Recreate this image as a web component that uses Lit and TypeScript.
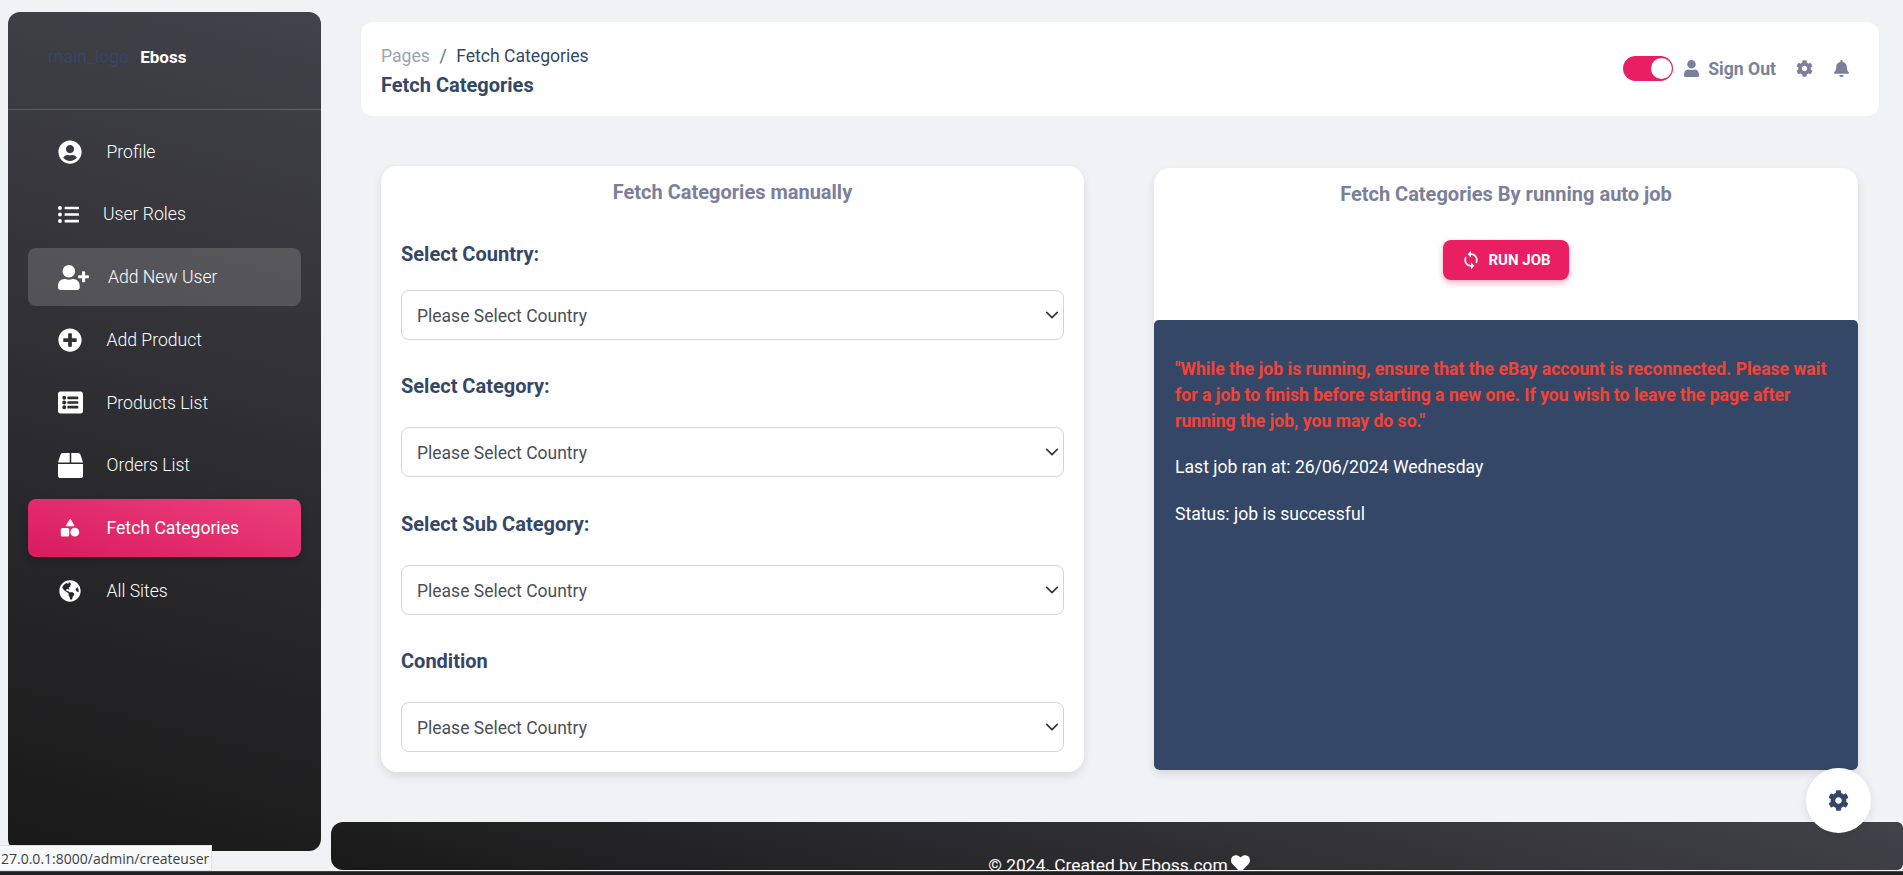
import { LitElement, css, html, svg } from "lit";
import { customElement } from "lit/decorators.js";

const ICONS: Record<string, { box: string; d: string }> = {
  profile: { box: "0 0 496 512", d: "M248 8C111 8 0 119 0 256s111 248 248 248 248-111 248-248S385 8 248 8zm0 96c48.600 0 88 39.400 88 88s-39.400 88-88 88-88-39.400-88-88 39.400-88 88-88zm0 344c-58.700 0-111.300-26.600-146.500-68.200 18.800-35.400 55.600-59.800 98.500-59.800 2.400 0 4.800.4 7.100 1.100 13 4.200 26.600 6.900 40.900 6.900 14.300 0 28-2.700 40.900-6.900 2.300-.7 4.700-1.100 7.100-1.100 42.900 0 79.700 24.400 98.500 59.800C359.300 421.400 306.700 448 248 448z" },
  list: { box: "0 0 512 512", d: "M48 48a48 48 0 1 0 48 48 48 48 0 0 0-48-48zm0 160a48 48 0 1 0 48 48 48 48 0 0 0-48-48zm0 160a48 48 0 1 0 48 48 48 48 0 0 0-48-48zm448 16H176a16 16 0 0 0-16 16v32a16 16 0 0 0 16 16h320a16 16 0 0 0 16-16v-32a16 16 0 0 0-16-16zm0-320H176a16 16 0 0 0-16 16v32a16 16 0 0 0 16 16h320a16 16 0 0 0 16-16V80a16 16 0 0 0-16-16zm0 160H176a16 16 0 0 0-16 16v32a16 16 0 0 0 16 16h320a16 16 0 0 0 16-16v-32a16 16 0 0 0-16-16z" },
  userPlus: { box: "0 0 640 512", d: "M624 208h-64v-64c0-8.800-7.200-16-16-16h-32c-8.800 0-16 7.200-16 16v64h-64c-8.800 0-16 7.200-16 16v32c0 8.800 7.200 16 16 16h64v64c0 8.800 7.200 16 16 16h32c8.800 0 16-7.200 16-16v-64h64c8.800 0 16-7.200 16-16v-32c0-8.800-7.200-16-16-16zm-400 48c70.700 0 128-57.300 128-128S294.700 0 224 0 96 57.300 96 128s57.300 128 128 128zm89.600 32h-16.700c-22.200 10.200-46.900 16-72.900 16s-50.600-5.800-72.900-16h-16.700C60.200 288 0 348.200 0 422.400V464c0 26.500 21.500 48 48 48h352c26.500 0 48-21.500 48-48v-41.600c0-74.200-60.200-134.400-134.400-134.400z" },
  plus: { box: "0 0 512 512", d: "M256 8C119 8 8 119 8 256s111 248 248 248 248-111 248-248S393 8 256 8zm144 276c0 6.600-5.400 12-12 12h-92v92c0 6.600-5.400 12-12 12h-56c-6.600 0-12-5.400-12-12v-92h-92c-6.600 0-12-5.400-12-12v-56c0-6.600 5.400-12 12-12h92v-92c0-6.600 5.400-12 12-12h56c6.600 0 12 5.400 12 12v92h92c6.600 0 12 5.400 12 12v56z" },
  listAlt: { box: "0 0 512 512", d: "M464 480H48c-26.510 0-48-21.490-48-48V80c0-26.510 21.490-48 48-48h416c26.510 0 48 21.490 48 48v352c0 26.510-21.490 48-48 48zM128 120c-22.091 0-40 17.909-40 40s17.909 40 40 40 40-17.909 40-40-17.909-40-40-40zm0 96c-22.091 0-40 17.909-40 40s17.909 40 40 40 40-17.909 40-40-17.909-40-40-40zm0 96c-22.091 0-40 17.909-40 40s17.909 40 40 40 40-17.909 40-40-17.909-40-40-40zm288-136v-32c0-6.627-5.373-12-12-12H204c-6.627 0-12 5.373-12 12v32c0 6.627 5.373 12 12 12h200c6.627 0 12-5.373 12-12zm0 96v-32c0-6.627-5.373-12-12-12H204c-6.627 0-12 5.373-12 12v32c0 6.627 5.373 12 12 12h200c6.627 0 12-5.373 12-12zm0 96v-32c0-6.627-5.373-12-12-12H204c-6.627 0-12 5.373-12 12v32c0 6.627 5.373 12 12 12h200c6.627 0 12-5.373 12-12z" },
  box: { box: "0 0 512 512", d: "M509.500 184.600L458.900 32.800C452.400 13.200 434.100 0 413.400 0H272v192h238.700c-.4-2.500-.4-5-1.200-7.400zM240 0H98.600c-20.700 0-39 13.200-45.500 32.800L2.500 184.600c-.8 2.400-.8 4.900-1.200 7.400H240V0zM0 224v240c0 26.500 21.500 48 48 48h416c26.500 0 48-21.500 48-48V224H0z" },
  globe: { box: "0 0 496 512", d: "M248 8C111.030 8 0 119.030 0 256s111.030 248 248 248 248-111.030 248-248S384.970 8 248 8zm82.290 357.600c-3.900 3.880-7.990 7.950-11.310 11.280-2.990 3-5.100 6.700-6.170 10.710-1.510 5.660-2.730 11.380-4.770 16.870l-17.390 46.850c-13.760 3-28 4.690-42.650 4.690v-27.380c1.690-12.620-7.640-36.260-22.630-51.250-6-6-9.370-14.140-9.370-22.630v-32.010c0-11.640-6.270-22.340-16.460-27.980-14.370-7.950-34.810-19.060-48.810-26.110-11.480-5.780-22.100-13.140-31.650-21.750l-.8-.72a114.792 114.792 0 0 1-18.060-20.740c-9.380-13.770-24.660-36.420-34.590-51.140 20.470-45.500 57.360-82.040 103.200-101.890l24.010 12.010C203.480 89.740 216 82.010 216 70.110v-11.300c7.990-1.290 16.120-2.110 24.430-2.410l28.300 28.300c6.250 6.250 6.250 16.380 0 22.630L264 112l-10.340 10.340c-3.120 3.120-3.120 8.190 0 11.310l4.690 4.690c3.120 3.120 3.120 8.190 0 11.310l-8 8a8.008 8.008 0 0 1-5.660 2.340h-8.990c-2.080 0-4.080.81-5.580 2.270l-9.920 9.650a8.008 8.008 0 0 0-1.580 9.310l15.590 31.190c2.660 5.320-1.210 11.580-7.150 11.580h-5.640c-1.930 0-3.790-.7-5.240-1.960l-9.280-8.060a16.017 16.017 0 0 0-15.550-3.100l-31.170 10.390a11.950 11.950 0 0 0-8.170 11.340c0 4.530 2.560 8.660 6.610 10.690l11.080 5.540c9.410 4.710 19.790 7.160 30.310 7.160s22.600 27.290 32 32h66.750c8.490 0 16.620 3.370 22.630 9.370l13.690 13.690a30.503 30.503 0 0 1 8.930 21.570 46.536 46.536 0 0 1-13.720 32.980zM417 274.250c-5.790-1.450-10.840-5-14.150-9.970l-17.980-26.970a23.970 23.970 0 0 1 0-26.620l19.590-29.380c2.320-3.470 5.500-6.290 9.240-8.150l12.980-6.490C440.200 193.590 448 223.870 448 256c0 8.670-.74 17.160-1.830 25.540L417 274.250z" },
  cog: { box: "0 0 512 512", d: "M487.400 315.700l-42.600-24.600c4.300-23.200 4.300-47 0-70.200l42.600-24.600c4.900-2.800 7.100-8.600 5.500-14-11.100-35.600-30-67.800-54.700-94.600-3.800-4.100-10-5.100-14.800-2.300L380.800 110c-17.900-15.400-38.500-27.300-60.800-35.100V25.800c0-5.600-3.900-10.500-9.400-11.700-36.700-8.200-74.300-7.800-109.200 0-5.500 1.200-9.400 6.100-9.400 11.700V75c-22.200 7.900-42.800 19.800-60.800 35.100L88.700 85.500c-4.900-2.800-11-1.900-14.800 2.300-24.700 26.700-43.600 58.900-54.700 94.600-1.700 5.400.6 11.200 5.500 14L67.300 221c-4.300 23.200-4.300 47 0 70.200l-42.600 24.600c-4.900 2.800-7.100 8.600-5.500 14 11.100 35.600 30 67.800 54.700 94.600 3.800 4.100 10 5.100 14.800 2.300l42.600-24.600c17.900 15.400 38.500 27.300 60.800 35.100v49.200c0 5.600 3.900 10.500 9.400 11.700 36.700 8.200 74.300 7.800 109.200 0 5.500-1.200 9.400-6.100 9.400-11.700v-49.200c22.200-7.900 42.800-19.800 60.800-35.100l42.600 24.600c4.900 2.800 11 1.900 14.800-2.300 24.700-26.700 43.600-58.900 54.700-94.600 1.500-5.500-.7-11.300-5.600-14.100zM256 336c-44.100 0-80-35.900-80-80s35.900-80 80-80 80 35.900 80 80-35.900 80-80 80z" },
  bell: { box: "0 0 448 512", d: "M224 512c35.320 0 63.970-28.650 63.970-64H160.030c0 35.350 28.650 64 63.970 64zm215.390-149.710c-19.320-20.760-55.470-51.990-55.470-154.290 0-77.700-54.480-139.900-127.940-155.160V32c0-17.670-14.320-32-31.980-32s-31.980 14.330-31.980 32v20.840C118.560 68.100 64.080 130.300 64.080 208c0 102.300-36.150 133.530-55.470 154.290-6 6.450-8.660 14.160-8.610 21.710.11 16.400 12.980 32 32.100 32h383.800c19.120 0 32-15.600 32.100-32 .05-7.550-2.610-15.270-8.610-21.710z" },
  user: { box: "0 0 448 512", d: "M224 256c70.700 0 128-57.300 128-128S294.700 0 224 0 96 57.300 96 128s57.300 128 128 128zm89.600 32h-16.700c-22.200 10.200-46.900 16-72.900 16s-50.600-5.800-72.900-16h-16.700C60.200 288 0 348.200 0 422.400V464c0 26.500 21.500 48 48 48h352c26.500 0 48-21.500 48-48v-41.600c0-74.200-60.200-134.400-134.400-134.400z" },
  sync: { box: "0 0 24 24", d: "M12 4V1L8 5l4 4V6c3.310 0 6 2.690 6 6 0 1.010-.25 1.970-.7 2.800l1.460 1.460C19.540 15.030 20 13.570 20 12c0-4.420-3.580-8-8-8zm0 14c-3.310 0-6-2.690-6-6 0-1.010.25-1.970.7-2.800L5.240 7.740C4.460 8.970 4 10.430 4 12c0 4.420 3.580 8 8 8v3l4-4-4-4v3z" },
  heart: { box: "0 0 512 512", d: "M462.300 62.600C407.500 15.900 326 24.300 275.700 76.200L256 96.500l-19.700-20.300C186.100 24.300 104.500 15.900 49.700 62.600c-62.800 53.600-66.100 149.800-9.900 207.900l193.500 199.800c12.500 12.900 32.800 12.900 45.300 0l193.500-199.800c56.300-58.100 53-154.300-9.800-207.900z" },
};

function icon(name: string, size: number) {
  const i = ICONS[name];
  return html`<svg class="ic" width=${size} height=${size} viewBox=${i.box} fill="currentColor">${svg`<path d=${i.d}></path>`}</svg>`;
}

// square + circle + triangle, mirrored from the usual shapes glyph
const shapesIcon = html`<svg class="ic" width="20" height="20" viewBox="0 0 20 20" fill="currentColor">
  <path d="M10.200 1.200l3.800 6.600H6.400z" stroke="currentColor" stroke-linejoin="round"></path>
  <rect x="0.800" y="10" width="8.400" height="8.400" rx="1.500"></rect>
  <circle cx="14.800" cy="14.200" r="4.400"></circle>
</svg>`;

const NAV = [
  { key: "profile", label: "Profile", icon: "profile", size: 24 },
  { key: "roles", label: "User Roles", icon: "list", size: 21 },
  { key: "adduser", label: "Add New User", icon: "userPlus", size: 31, hover: true },
  { key: "addproduct", label: "Add Product", icon: "plus", size: 24 },
  { key: "products", label: "Products List", icon: "listAlt", size: 25 },
  { key: "orders", label: "Orders List", icon: "box", size: 25 },
  { key: "fetch", label: "Fetch Categories", active: true },
  { key: "sites", label: "All Sites", icon: "globe", size: 22 },
];

const FIELDS = ["Select Country:", "Select Category:", "Select Sub Category:", "Condition"];

@customElement("app-root")
export class AppRoot extends LitElement {
  render() {
    return html`
      <div class="shell">
        <aside class="sidebar">
          <div class="brand">
            <span class="logo-alt">main_logo</span>
            <span class="brand-name">Eboss</span>
          </div>
          <nav class="menu">
            ${NAV.map(
              (n) => html`
                <a class="item item-${n.key} ${n.active ? "active" : ""} ${n.hover ? "hover" : ""}">
                  <span class="item-icon">${n.icon ? icon(n.icon, n.size!) : shapesIcon}</span>
                  <span class="item-label">${n.label}</span>
                </a>
              `,
            )}
          </nav>
        </aside>

        <div class="main">
          <header class="navbar">
            <div>
              <div class="crumbs"><span class="muted">Pages</span><span class="slash">/</span><span>Fetch Categories</span></div>
              <div class="page-title">Fetch Categories</div>
            </div>
            <div class="actions">
              <span class="switch"><span class="knob"></span></span>
              <span class="signout">${icon("user", 17)}<span class="signout-text">Sign Out</span></span>
              <span class="act-icon">${icon("cog", 17)}</span>
              <span class="act-icon">${icon("bell", 17)}</span>
            </div>
          </header>

          <section class="cards">
            <div class="card left">
              <h3 class="card-title">Fetch Categories manually</h3>
              ${FIELDS.map(
                (f) => html`
                  <div class="field">
                    <label>${f}</label>
                    <select><option>Please Select Country</option></select>
                  </div>
                `,
              )}
            </div>

            <div class="card right">
              <h3 class="card-title">Fetch Categories By running auto job</h3>
              <div class="btn-row">
                <button class="run">${icon("sync", 20)}<span>RUN JOB</span></button>
              </div>
              <div class="panel">
                <p class="warn">"While the job is running, ensure that the eBay account is reconnected. Please wait for a job to finish before starting a new one. If you wish to leave the page after running the job, you may do so."</p>
                <p>Last job ran at: 26/06/2024 Wednesday</p>
                <p>Status: job is successful</p>
              </div>
            </div>
          </section>

          <footer class="footer">
            <span>© 2024. Created by Eboss.com</span>${icon("heart", 19)}
          </footer>
        </div>
      </div>
      <div class="taskbar"></div>

      <div class="fab">${icon("cog", 21)}</div>
      <div class="url">27.0.0.1:8000/admin/createuser</div>
    `;
  }

  static styles = css`
    :host {
      display: block;
      position: relative;
      height: 875px;
      overflow: hidden;
      background: #f0f2f5;
      font-family: Roboto, sans-serif;
      font-size: 17.600px;
      color: #344767;
    }

    .ic {
      display: block;
      flex: none;
    }

    .shell {
      display: flex;
      height: 871px;
    }

    .sidebar {
      flex: none;
      width: 313px;
      height: 839px;
      margin: 12px 0 0 8px;
      border-radius: 12px;
      background: linear-gradient(195deg, #42424a, #191919);
      color: #fff;
    }

    .brand {
      display: flex;
      align-items: center;
      gap: 11px;
      height: 98px;
      padding: 0 0 8px 40px;
      box-sizing: border-box;
      border-bottom: 1px solid rgba(255, 255, 255, 0.16);
    }

    .logo-alt {
      color: #344767;
    }

    .brand-name {
      font-size: 17px;
      font-weight: 700;
    }

    .menu {
      display: flex;
      flex-direction: column;
      gap: 4.750px;
      margin-top: 12.500px;
      padding: 0 20px;
    }

    .item {
      display: flex;
      align-items: center;
      height: 58px;
      border-radius: 8px;
      font-weight: 300;
    }

    .item-icon {
      display: flex;
      justify-content: center;
      width: 32px;
      margin-left: 26px;
      margin-right: 20.500px;
    }

    .item-roles .item-icon .ic {
      margin-right: 4px;
    }

    .item-roles .item-label {
      margin-left: -3.500px;
    }

    .item-adduser .item-icon .ic {
      margin-left: 6px;
    }

    .item-adduser .item-label {
      margin-left: 1.500px;
    }

    .item.hover {
      background: rgba(255, 255, 255, 0.16);
    }

    .item.active {
      background: linear-gradient(195deg, #ec407a, #d81b60);
      box-shadow: 0 4px 8px rgba(0, 0, 0, 0.2);
      font-weight: 400;
    }

    .main {
      flex: 1;
      min-width: 0;
      display: flex;
      flex-direction: column;
      margin-left: 10px;
    }

    .navbar {
      display: flex;
      justify-content: space-between;
      align-items: center;
      height: 94px;
      margin: 22px 24px 0 30px;
      padding: 2px 29px 0 20px;
      box-sizing: border-box;
      background: #fff;
      border-radius: 12px;
    }

    .crumbs {
      display: flex;
      line-height: 30px;
    }

    .crumbs .muted {
      opacity: 0.5;
    }

    .slash {
      margin: 0 9.500px;
      opacity: 0.8;
    }

    .page-title {
      font-size: 20px;
      font-weight: 700;
      line-height: 28px;
    }

    .actions {
      display: flex;
      align-items: center;
      margin-bottom: 4px;
      color: #7b809a;
    }

    .switch {
      display: flex;
      justify-content: flex-end;
      align-items: center;
      width: 50px;
      height: 25px;
      padding: 0 1.500px;
      box-sizing: border-box;
      border-radius: 13px;
      background: #e91e63;
    }

    .knob {
      width: 21px;
      height: 21px;
      border-radius: 50%;
      background: #fff;
    }

    .signout {
      display: flex;
      align-items: center;
      gap: 8px;
      margin-left: 10px;
      font-weight: 700;
    }

    .signout-text {
      padding-top: 2px;
    }

    .act-icon {
      margin-left: 20px;
    }

    .cards {
      flex: 1;
      display: grid;
      grid-template-columns: 703px 704px;
      gap: 70px;
      padding: 0 45px 0 50px;
      margin-top: 50px;
      align-items: start;
    }

    .card {
      background: #fff;
      border-radius: 16px;
      box-shadow: 0 4px 10px rgba(0, 0, 0, 0.1);
      box-sizing: border-box;
    }

    .left {
      height: 606px;
      padding: 0 20px;
    }

    .right {
      height: 602px;
      margin-top: 2px;
      display: flex;
      flex-direction: column;
      overflow: hidden;
      border-radius: 16px 16px 5px 5px;
    }

    .card-title {
      margin: 0;
      padding-top: 14px;
      text-align: center;
      color: #7b809a;
      font-size: 20px;
      font-weight: 700;
      line-height: 25px;
    }

    .field {
      display: flex;
      flex-direction: column;
      margin-top: 32.300px;
    }

    .field label {
      color: #344767;
      font-size: 20px;
      font-weight: 700;
      line-height: 28px;
      margin-bottom: 27px;
    }

    .left .field:first-of-type {
      margin-top: 35px;
    }

    .left .field:first-of-type label {
      margin-bottom: 22px;
    }

    select {
      appearance: none;
      width: 100%;
      height: 50px;
      padding: 2px 36px 0 15px;
      border: 1px solid #d2d6da;
      border-radius: 8px;
      background: #fff url("data:image/svg+xml,%3csvg xmlns='http://www.w3.org/2000/svg' viewBox='0 0 16 16'%3e%3cpath fill='none' stroke='%23343a40' stroke-linecap='round' stroke-linejoin='round' stroke-width='2' d='M2 5l6 6 6-6'/%3e%3c/svg%3e") no-repeat right 3px center / 16px 14px;
      color: #495057;
      font-family: inherit;
      font-size: 17.500px;
    }

    .btn-row {
      display: flex;
      justify-content: center;
      padding-top: 33px;
      height: 113px;
      box-sizing: border-box;
    }

    .run {
      display: flex;
      align-items: center;
      gap: 7px;
      height: 40px;
      padding: 0 18.500px;
      border: 0;
      border-radius: 8px;
      background: #e91e63;
      color: #fff;
      font-family: inherit;
      font-size: 15px;
      font-weight: 700;
      box-shadow: 0 3px 6px rgba(233, 30, 99, 0.35);
    }

    .panel {
      flex: 1;
      padding: 36px 21px 0;
      background: #344767;
      color: #fff;
      border-radius: 5px;
      line-height: 26px;
    }

    .panel p {
      margin: 0 0 21px;
    }

    .panel .warn {
      margin-bottom: 20px;
      color: #f44335;
      font-weight: 700;
    }

    .footer {
      display: flex;
      justify-content: center;
      align-items: flex-start;
      gap: 3px;
      flex: none;
      height: 48px;
      box-sizing: border-box;
      margin-bottom: 1px;
      padding: 32px 0 0 4px;
      border-radius: 12px 6px 6px 12px;
      background: linear-gradient(195deg, #42424a, #191919);
      color: #fff;
      font-size: 17.400px;
      line-height: 22px;
      overflow: hidden;
    }

    .taskbar {
      height: 4px;
      background: #1f1f1f;
      border-top: 1px solid #444;
      box-sizing: border-box;
    }

    .fab {
      position: absolute;
      left: 1806px;
      top: 768px;
      display: flex;
      align-items: center;
      justify-content: center;
      width: 65px;
      height: 65px;
      border-radius: 50%;
      background: #fff;
      color: #344767;
      box-shadow: 0 2px 10px rgba(0, 0, 0, 0.1);
    }

    .url {
      position: absolute;
      left: 0;
      top: 845px;
      width: 212px;
      height: 26px;
      box-sizing: border-box;
      padding-left: 1px;
      background: #f8f9fa;
      border: 1px solid #e0e0e0;
      border-left: 0;
      color: #3c4043;
      font-family: "Open Sans", sans-serif;
      font-size: 14px;
      line-height: 25px;
      white-space: nowrap;
    }
  `;
}
